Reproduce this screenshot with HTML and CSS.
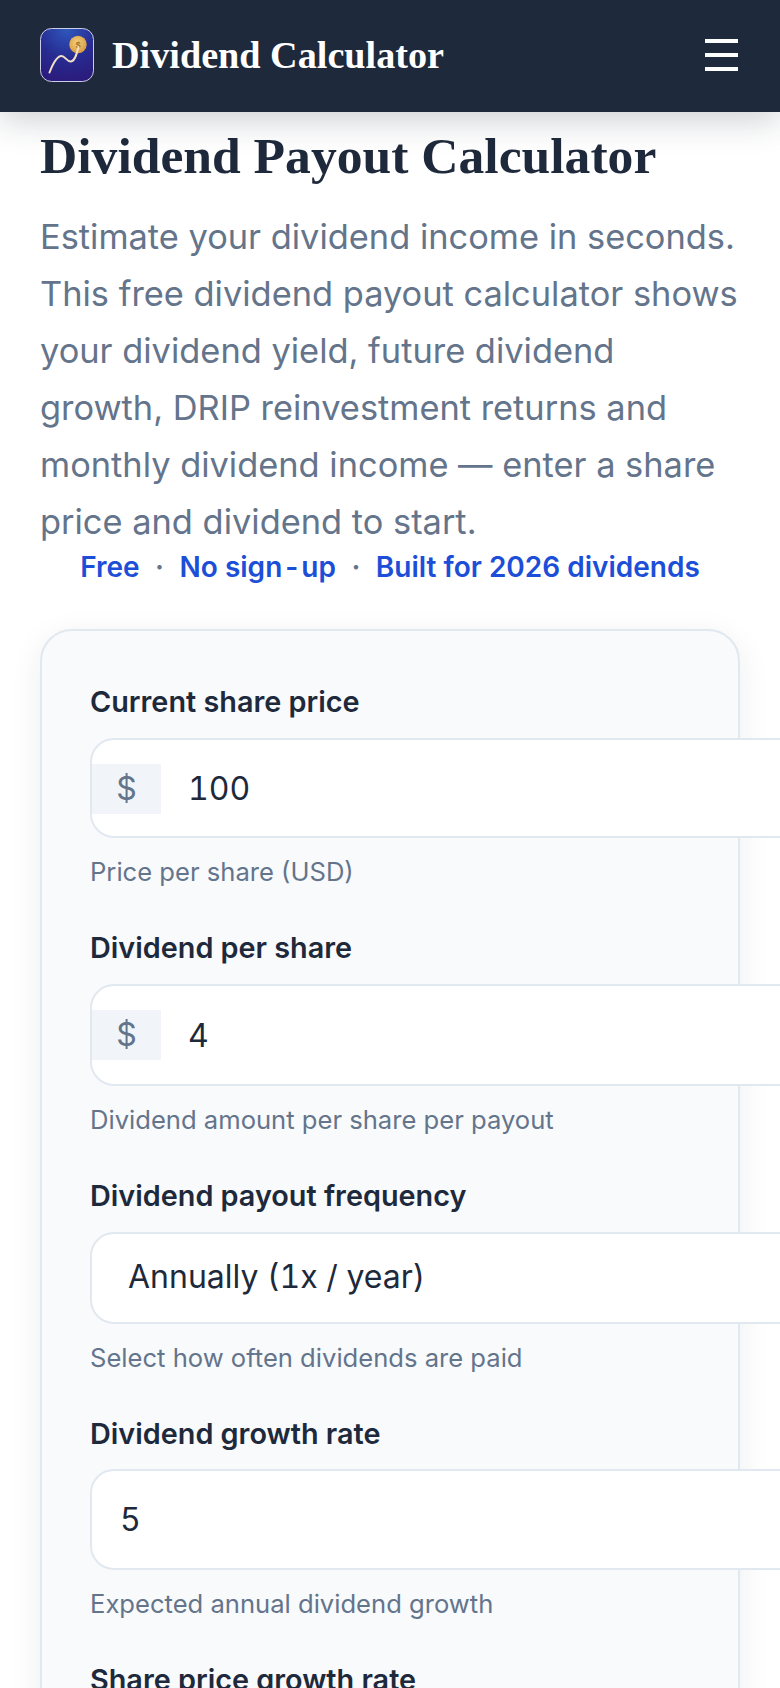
FILE: index.html
```html
<!DOCTYPE html>
<html lang="en">
<head>
    <meta charset="UTF-8">
    <meta name="viewport" content="width=device-width, initial-scale=1.0">
    <title>Dividend Payout Calculator</title>
    <link rel="stylesheet" href="styles.css">
</head>
<body>

    <header class="site-header">
        <a href="#" class="brand">
            <svg class="brand-logo" viewBox="0 0 54 54" aria-hidden="true">
                <defs>
                    <radialGradient id="logoBg" cx="50%" cy="0%" r="100%">
                        <stop offset="0" stop-color="#2f58bd"/>
                        <stop offset="0.55" stop-color="#272c92"/>
                        <stop offset="1" stop-color="#2b1b7c"/>
                    </radialGradient>
                    <radialGradient id="coin" cx="45%" cy="40%" r="60%">
                        <stop offset="0" stop-color="#f4cf7d"/>
                        <stop offset="1" stop-color="#d89c42"/>
                    </radialGradient>
                </defs>
                <rect x="0.5" y="0.5" width="53" height="53" rx="11" fill="url(#logoBg)" stroke="#c9cde6"/>
                <circle cx="38" cy="16.5" r="8.7" fill="url(#coin)"/>
                <text x="38" y="19.5" class="coin-text">$</text>
                <path d="M9.5 44.5 C12 38 16 28 21.5 28 C25 28 27 34 31 33.5 C35 33 37 25 38.5 19" fill="none" stroke="#f3dfc6" stroke-width="2" stroke-linecap="round"/>
            </svg>
            <span class="brand-name">Dividend Calculator</span>
        </a>
        <button type="button" class="menu-btn" aria-label="Menu">
            <span></span>
            <span></span>
            <span></span>
        </button>
    </header>

    <main class="page">
        <h1>Dividend Payout Calculator</h1>
        <p class="intro">Estimate your dividend income in seconds. This free dividend payout calculator shows your dividend yield, future dividend growth, DRIP reinvestment returns and monthly dividend income — enter a share price and dividend to start.</p>
        <p class="tagline">
            <span>Free</span>
            <span class="dot">·</span>
            <span>No sign<span class="wide-hyphen">-</span>up</span>
            <span class="dot">·</span>
            <span>Built for 2026 dividends</span>
        </p>

        <form class="calc-card">
            <div class="field">
                <label for="price">Current share price</label>
                <div class="input-wrap">
                    <span class="prefix">$</span>
                    <input type="text" id="price" value="100">
                </div>
                <p class="hint">Price per share (USD)</p>
            </div>

            <div class="field">
                <label for="dividend">Dividend per share</label>
                <div class="input-wrap tall">
                    <span class="prefix">$</span>
                    <input type="text" id="dividend" value="4">
                </div>
                <p class="hint">Dividend amount per share per payout</p>
            </div>

            <div class="field">
                <label for="frequency">Dividend payout frequency</label>
                <select id="frequency" class="select-box">
                    <option>Annually (1x / year)</option>
                </select>
                <p class="hint">Select how often dividends are paid</p>
            </div>

            <div class="field">
                <label for="growth">Dividend growth rate</label>
                <input type="text" id="growth" class="plain-input" value="5">
                <p class="hint">Expected annual dividend growth</p>
            </div>

            <div class="field">
                <label for="priceGrowth">Share price growth rate</label>
            </div>
        </form>
    </main>

</body>
</html>
```

FILE: styles.css
```css
* {
    box-sizing: border-box;
}
html, body {
    height: 1688px;
    overflow: hidden;
}
body {
    margin: 0;
    background: #fff;
    color: #1e293b;
    font-family: Inter, "Liberation Sans", sans-serif;
}
.site-header {
    position: relative;
    z-index: 2;
    display: flex;
    justify-content: space-between;
    align-items: center;
    height: 112px;
    padding: 0 42px 3px 40px;
    background: #1e293b;
    box-shadow: 0 8px 32px rgba(30,41,59,0.22);
}
.brand {
    display: flex;
    align-items: center;
    gap: 18px;
    color: #fff;
    text-decoration: none;
}
.brand-logo {
    width: 54px;
    height: 54px;
}
.coin-text {
    font-size: 8px;
    font-weight: 700;
    fill: #a8701f;
    text-anchor: middle;
}
.brand-name {
    font-family: "Liberation Serif", serif;
    font-size: 38.2px;
    font-weight: 700;
}
.menu-btn {
    display: flex;
    flex-direction: column;
    gap: 10px;
    width: 33px;
    padding: 0;
    border: none;
    background: none;
}
.menu-btn span {
    height: 4px;
    background: #fff;
}
.page {
    padding: 0 40px;
}
h1 {
    margin: 14px 0 0;
    font-family: "Liberation Serif", serif;
    font-size: 51.6px;
    line-height: 60px;
    font-weight: 700;
    color: #1e293b;
    white-space: nowrap;
}
.intro {
    margin: 22px 0 0;
    font-size: 34.4px;
    line-height: 57px;
    color: #64748b;
}
.tagline {
    display: flex;
    justify-content: center;
    gap: 15.5px;
    margin: -3px 0 0;
    font-size: 28px;
    line-height: 40px;
    font-weight: 600;
    color: #1d4ed8;
}
.wide-hyphen {
    margin: 0 3px;
}
.dot {
    color: #64748b;
}
.calc-card {
    margin-top: 42px;
    padding: 54px 48px 0;
    height: 1200px;
    background: #f8fafc;
    border: 2px solid #e2e8f0;
    border-radius: 32px;
    box-shadow: 0 8px 32px rgba(30,41,59,0.08);
}
.field {
    margin-bottom: 44.5px;
}
label {
    display: block;
    margin-bottom: 19px;
    font-size: 28.8px;
    line-height: 34px;
    font-weight: 600;
    color: #1e293b;
}
.input-wrap, .select-box, .plain-input {
    width: 720px;
    background: #fff;
    border: 2px solid #e2e8f0;
    border-radius: 24px;
}
.input-wrap {
    display: flex;
    align-items: center;
    height: 100px;
}
.input-wrap.tall {
    height: 102px;
}
.prefix {
    width: 69px;
    height: 50px;
    margin-top: 2px;
    line-height: 50px;
    text-align: center;
    font-size: 32px;
    color: #64748b;
    background: #f1f5f9;
}
.tall .prefix {
    margin-top: 0;
}
input, select {
    font-family: Inter, "Liberation Sans", sans-serif;
    font-size: 32px;
    font-variant-numeric: tabular-nums;
    color: #1e293b;
    outline: none;
}
.input-wrap input {
    flex: 1;
    min-width: 0;
    padding: 0 27px;
    border: none;
    background: none;
}
.select-box {
    display: block;
    height: 92px;
    padding: 0 36px 4px;
    appearance: none;
}
.plain-input {
    display: block;
    height: 101px;
    margin-top: -1px;
    padding: 0 28px;
}
.hint {
    margin: 18.5px 0 0;
    font-size: 25.6px;
    line-height: 30px;
    color: #64748b;
}
```
